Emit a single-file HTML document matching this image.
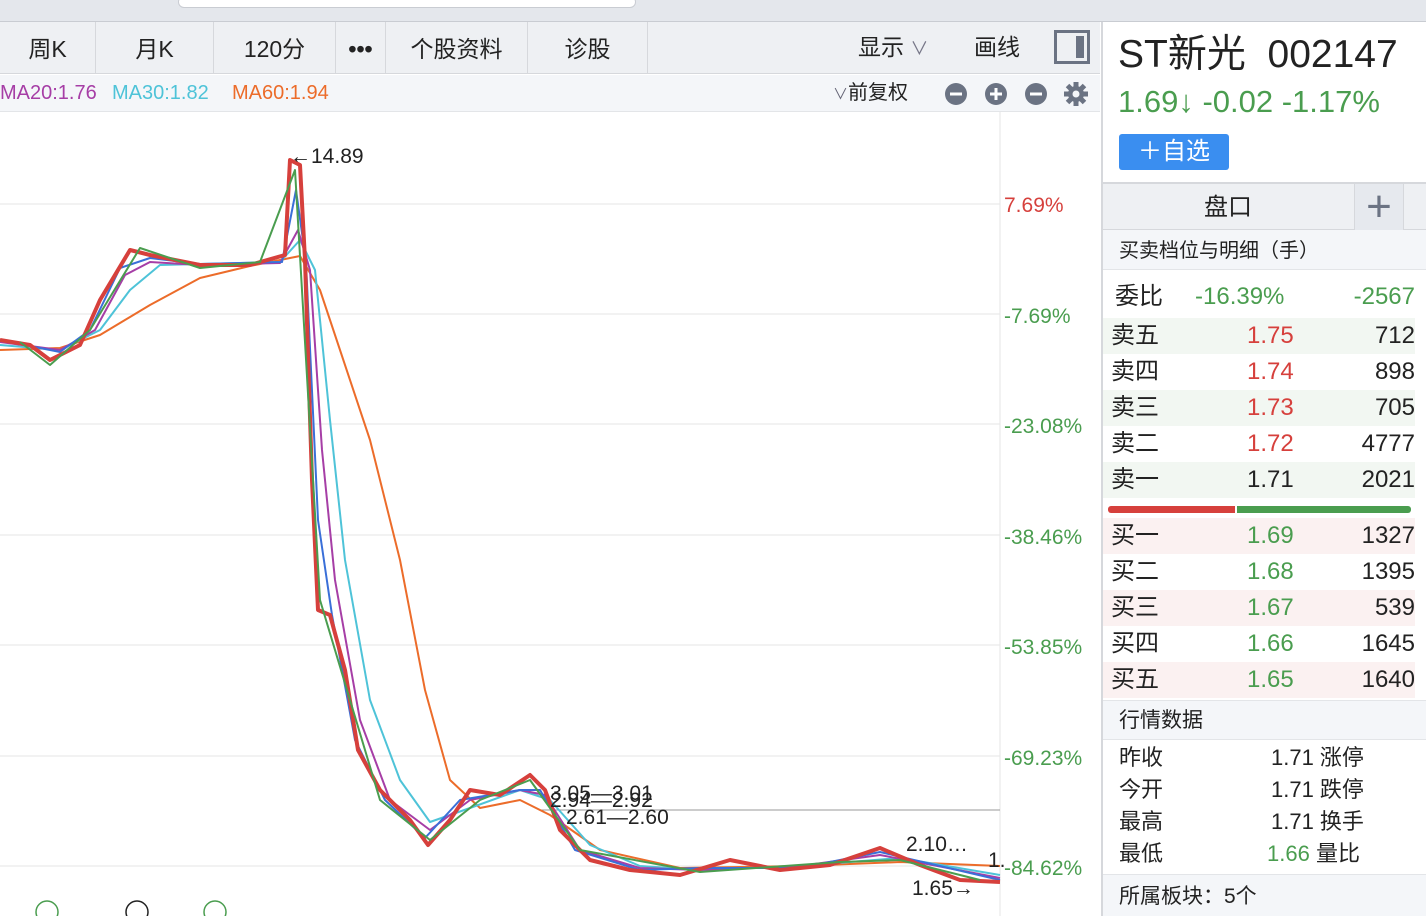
<!DOCTYPE html>
<html><head><meta charset="utf-8"><style>
*{margin:0;padding:0;box-sizing:border-box}
body{width:1426px;height:916px;overflow:hidden;background:#fff;font-family:"Liberation Sans","Noto Sans CJK SC",sans-serif;position:relative;color:#222}
.abs{position:absolute}
.top{left:0;top:0;width:1426px;height:22px;background:#e4e7ec;border-bottom:1px solid #c9ccd2}
.search{left:178px;top:-4px;width:458px;height:12px;background:#fff;border:1px solid #c9ccd2;border-radius:6px}
.tabs{left:0;top:22px;width:1100px;height:52px;background:#eef0f3;border-bottom:1px solid #d6d8dc}
.tab{position:absolute;top:0;height:52px;line-height:54px;font-size:23px;text-align:center;border-right:1px solid #d6d8dc;color:#222}
.mabar{left:0;top:75px;width:1100px;height:37px;background:#f4f6f9;border-bottom:1px solid #e3e5e8;font-size:20px;line-height:37px}
.right{left:1101px;top:22px;width:325px;height:894px;border-left:2px solid #d6d8dc;background:#fff}
.g{color:#4a9d4f}.r{color:#d6403c}
.row{position:absolute;left:0;width:312px;height:36px;font-size:24px;line-height:36px}
.row span{position:absolute}
</style></head><body>
<div class="abs top"></div>
<div class="abs search"></div>
<div class="abs tabs">
<div class="tab" style="left:0;width:96px">周K</div>
<div class="tab" style="left:96px;width:118px">月K</div>
<div class="tab" style="left:214px;width:122px">120分</div>
<div class="tab" style="left:336px;width:50px;font-weight:bold">•••</div>
<div class="tab" style="left:386px;width:142px">个股资料</div>
<div class="tab" style="left:528px;width:120px">诊股</div>
<div class="abs" style="left:858px;top:0;line-height:50px;font-size:23px">显示 <span style="color:#778;font-size:18px">∨</span></div>
<div class="abs" style="left:974px;top:0;line-height:50px;font-size:23px">画线</div>
<div class="abs" style="left:1054px;top:8px;width:36px;height:34px;border:3px solid #6b7383"><div style="position:absolute;right:3px;top:3px;width:8px;height:22px;background:#6b7383"></div></div>
</div>
<div class="abs mabar">
<span class="abs" style="left:0;color:#a63ea6">MA20:1.76</span>
<span class="abs" style="left:112px;color:#4ec3d8">MA30:1.82</span>
<span class="abs" style="left:232px;color:#ec6c2a">MA60:1.94</span>
<span class="abs" style="left:833px;font-size:20px"><span style="color:#667;font-size:15px">∨</span>前复权</span>
<svg class="abs" style="left:943px;top:7px" width="150" height="24">
<circle cx="13" cy="12" r="11" fill="#6b7383"/><rect x="7" y="10.5" width="12" height="3" fill="#fff"/>
<circle cx="53" cy="12" r="11" fill="#6b7383"/><rect x="47" y="10.5" width="12" height="3" fill="#fff"/><rect x="51.5" y="6" width="3" height="12" fill="#fff"/>
<circle cx="93" cy="12" r="11" fill="#6b7383"/><rect x="87" y="10.5" width="12" height="3" fill="#fff"/>
<g transform="translate(133,12)" fill="#6b7383"><circle r="8"/><g><rect x="-2.5" y="-12" width="5" height="24"/><rect x="-12" y="-2.5" width="24" height="5"/><rect x="-2.5" y="-12" width="5" height="24" transform="rotate(45)"/><rect x="-2.5" y="-12" width="5" height="24" transform="rotate(-45)"/></g><circle r="3.5" fill="#f4f6f9"/></g>
</svg>
</div>
<svg class="abs" style="left:0;top:112px" width="1100" height="804">
<g stroke="#e6e6e6" stroke-width="1">
<line x1="0" y1="92" x2="1000" y2="92"/><line x1="0" y1="202" x2="1000" y2="202"/><line x1="0" y1="312" x2="1000" y2="312"/><line x1="0" y1="423" x2="1000" y2="423"/><line x1="0" y1="533" x2="1000" y2="533"/><line x1="0" y1="644" x2="1000" y2="644"/><line x1="0" y1="754" x2="1000" y2="754"/>
<line x1="1000" y1="0" x2="1000" y2="804"/>
</g>
<line x1="540" y1="698" x2="1000" y2="698" stroke="#999"/>
<g font-size="21" fill="#4a9d4f">
<text x="1004" y="100" fill="#d6403c">7.69%</text>
<text x="1004" y="211">-7.69%</text><text x="1004" y="321">-23.08%</text><text x="1004" y="432">-38.46%</text><text x="1004" y="542">-53.85%</text><text x="1004" y="653">-69.23%</text><text x="1004" y="763">-84.62%</text>
</g>
<g transform="translate(0,-112)" fill="none" stroke-linejoin="round">
<polyline stroke="#ec6c2a" stroke-width="2" points="0,350 60,348 100,335 150,305 200,278 250,266 300,256 320,290 340,350 370,440 400,560 425,690 450,780 480,808 520,800 550,815 600,850 680,868 800,866 900,862 1000,866"/>
<polyline stroke="#4ec3d8" stroke-width="2" points="0,345 60,350 100,330 130,290 160,265 200,264 280,262 300,240 315,270 330,420 345,560 370,700 400,780 430,822 470,808 520,790 550,800 590,845 640,866 700,870 800,866 900,858 1000,875"/>
<polyline stroke="#a63ea6" stroke-width="2" points="0,342 60,350 95,330 125,275 150,262 200,265 280,263 298,230 310,270 322,450 335,580 360,720 390,800 430,830 470,800 520,790 545,795 580,850 640,868 700,870 800,866 880,855 1000,878"/>
<polyline stroke="#3a6fd8" stroke-width="2" points="0,340 60,352 90,330 120,268 150,258 200,264 282,262 296,190 306,262 318,520 332,615 355,740 385,800 425,838 460,800 520,790 540,790 575,850 640,870 700,868 800,868 880,852 1000,880"/>
<polyline stroke="#d6403c" stroke-width="4" points="0,340 30,345 50,360 80,345 100,300 130,250 150,255 200,265 250,265 285,255 290,160 300,165 305,260 312,480 318,610 330,615 345,670 358,750 380,790 410,820 428,845 450,820 470,790 500,795 530,775 545,790 560,830 590,860 630,870 680,875 730,860 780,870 830,865 880,848 920,865 960,880 1000,882"/>
<polyline stroke="#4a9d4f" stroke-width="2" points="20,342 50,365 90,330 140,248 200,268 260,262 295,170 320,600 350,700 380,800 430,840 480,800 530,780 580,850 700,872 840,862 900,860 980,880"/>
<text x="290" y="163" fill="#222" stroke="none" font-size="21">←14.89</text>
<text x="550" y="800" fill="#222" stroke="none" font-size="21">3.05—3.01</text>
<text x="550" y="807" fill="#222" stroke="none" font-size="21">2.94—2.92</text>
<text x="566" y="824" fill="#222" stroke="none" font-size="21">2.61—2.60</text>
<text x="906" y="851" fill="#222" stroke="none" font-size="21">2.10…</text>
<text x="912" y="895" fill="#222" stroke="none" font-size="21">1.65→</text>
<text x="988" y="867" fill="#222" stroke="none" font-size="21">1.</text>
</g>
<g fill="none" stroke="#4a9d4f" stroke-width="1.5"><circle cx="47" cy="800" r="11"/><circle cx="215" cy="800" r="11"/></g>
<circle cx="137" cy="800" r="11" fill="none" stroke="#222" stroke-width="1.5"/>
</svg>
<div class="abs right">
<div class="abs" style="left:15px;top:8px;font-size:39px;line-height:50px">ST新光 &nbsp;002147</div>
<div class="abs g" style="left:15px;top:62px;font-size:31px">1.69↓ -0.02 -1.17%</div>
<div class="abs" style="left:16px;top:112px;width:110px;height:36px;background:#3a8ef0;border-radius:3px;color:#fff;font-size:24px;line-height:36px;text-align:center">＋自选</div>
<div class="abs" style="left:0;top:160px;width:325px;height:48px;background:#eef0f3;border-top:2px solid #d6d8dc;border-bottom:1px solid #d6d8dc">
<div class="abs" style="left:0;width:250px;text-align:center;font-size:24px;line-height:48px">盘口</div>
<div class="abs" style="left:251px;top:0;width:50px;height:46px;border-left:1px solid #d6d8dc;border-right:1px solid #d6d8dc;background:#e6e9ee;color:#6b7383;font-size:44px;line-height:46px;text-align:center">+</div>
</div>
<div class="abs" style="left:0;top:208px;width:325px;height:40px;background:#f4f6f9;border-bottom:1px solid #e3e5e8;font-size:20px;line-height:42px;padding-left:16px">买卖档位与明细（手）</div>
<div class="row" style="top:257px"><span style="left:12px">委比</span><span class="g" style="left:92px">-16.39%</span><span class="g" style="right:0">-2567</span></div>
<div class="row" style="top:296px;background:#f2f7f2"><span style="left:8px">卖五</span><span class="r" style="left:144px">1.75</span><span style="right:0">712</span></div>
<div class="row" style="top:332px"><span style="left:8px">卖四</span><span class="r" style="left:144px">1.74</span><span style="right:0">898</span></div>
<div class="row" style="top:368px;background:#f2f7f2"><span style="left:8px">卖三</span><span class="r" style="left:144px">1.73</span><span style="right:0">705</span></div>
<div class="row" style="top:404px"><span style="left:8px">卖二</span><span class="r" style="left:144px">1.72</span><span style="right:0">4777</span></div>
<div class="row" style="top:440px;background:#f2f7f2"><span style="left:8px">卖一</span><span style="left:144px">1.71</span><span style="right:0">2021</span></div>
<div class="abs" style="left:5px;top:484px;width:127px;height:7px;background:#d6403c;border-radius:3px 0 0 3px"></div>
<div class="abs" style="left:134px;top:484px;width:174px;height:7px;background:#4a9d4f;border-radius:0 3px 3px 0"></div>
<div class="row" style="top:496px;background:#fbf1f1"><span style="left:8px">买一</span><span class="g" style="left:144px">1.69</span><span style="right:0">1327</span></div>
<div class="row" style="top:532px"><span style="left:8px">买二</span><span class="g" style="left:144px">1.68</span><span style="right:0">1395</span></div>
<div class="row" style="top:568px;background:#fbf1f1"><span style="left:8px">买三</span><span class="g" style="left:144px">1.67</span><span style="right:0">539</span></div>
<div class="row" style="top:604px"><span style="left:8px">买四</span><span class="g" style="left:144px">1.66</span><span style="right:0">1645</span></div>
<div class="row" style="top:640px;background:#fbf1f1"><span style="left:8px">买五</span><span class="g" style="left:144px">1.65</span><span style="right:0">1640</span></div>
<div class="abs" style="left:0;top:678px;width:325px;height:40px;background:#f4f6f9;border-top:1px solid #e3e5e8;border-bottom:1px solid #e3e5e8;font-size:21px;line-height:40px;padding-left:16px">行情数据</div>
<div class="row" style="top:720px;height:32px;line-height:32px;font-size:22px"><span style="left:16px">昨收</span><span style="left:168px">1.71 涨停</span></div>
<div class="row" style="top:752px;height:32px;line-height:32px;font-size:22px"><span style="left:16px">今开</span><span style="left:168px">1.71 跌停</span></div>
<div class="row" style="top:784px;height:32px;line-height:32px;font-size:22px"><span style="left:16px">最高</span><span style="left:168px">1.71 换手</span></div>
<div class="row" style="top:816px;height:32px;line-height:32px;font-size:22px"><span style="left:16px">最低</span><span style="left:164px"><span class="g" style="position:static">1.66</span> 量比</span></div>
<div class="abs" style="left:0;top:852px;width:325px;height:42px;background:#f4f6f9;border-top:1px solid #e3e5e8;font-size:21px;line-height:44px;padding-left:16px">所属板块：5个</div>
</div>
</body></html>
